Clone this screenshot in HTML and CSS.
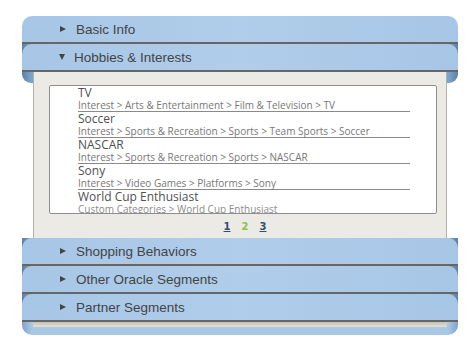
FILE: index.html
```html
<!DOCTYPE html>
<html>
<head>
    <meta charset="UTF-8">
    <title>segments</title>
    <link rel="stylesheet" href="styles.css">
</head>
<body>
    <div class="acc">
        <div class="head"><span class="tri"></span>Basic Info</div>
        <div class="fold">
            <div class="head"><span class="tri down"></span>Hobbies &amp; Interests</div>
        </div>
        <div class="sheet">
            <div class="panel">
                <div class="box">
                    <div class="item">
                        <div class="title">TV</div>
                        <div class="crumb">Interest &gt; Arts &amp; Entertainment &gt; Film &amp; Television &gt; TV</div>
                    </div>
                    <div class="item">
                        <div class="title">Soccer</div>
                        <div class="crumb">Interest &gt; Sports &amp; Recreation &gt; Sports &gt; Team Sports &gt; Soccer</div>
                    </div>
                    <div class="item">
                        <div class="title">NASCAR</div>
                        <div class="crumb">Interest &gt; Sports &amp; Recreation &gt; Sports &gt; NASCAR</div>
                    </div>
                    <div class="item">
                        <div class="title">Sony</div>
                        <div class="crumb">Interest &gt; Video Games &gt; Platforms &gt; Sony</div>
                    </div>
                    <div class="item">
                        <div class="title">World Cup Enthusiast</div>
                        <div class="crumb last">Custom Categories &gt; World Cup Enthusiast</div>
                    </div>
                </div>
                <div class="pages">
                    <a href="#">1</a>
                    <span class="cur">2</span>
                    <a href="#">3</a>
                </div>
            </div>
        </div>
        <div class="fold">
            <div class="head"><span class="tri"></span>Shopping Behaviors</div>
        </div>
        <div class="fold">
            <div class="head"><span class="tri"></span>Other Oracle Segments</div>
        </div>
        <div class="fold">
            <div class="head"><span class="tri"></span>Partner Segments</div>
        </div>
        <div class="roll"><div class="foot"></div></div>
    </div>
</body>
</html>
```

FILE: styles.css
```css
body {
    margin: 0;
    padding: 16px 0 0 22px;
    background: #fff;
    font-family: "Liberation Sans", Arial, sans-serif;
}
.acc {
    width: 436px;
}
.head {
    height: 26px;
    display: flex;
    align-items: center;
    padding-left: 38px;
    background: linear-gradient(to right, #a7c6e6, #b0cdea 50%, #a7c6e6);
    border-radius: 10px 10px 0 0;
    border-bottom: 2px solid #666;
    color: #444;
    font-size: 13.5px;
}
/* curl of the sheet above, seen in the rounded corners */
.fold {
    background: linear-gradient(to right, #5a80aa, #7ea3c9 9px, #7ea3c9 calc(100% - 9px), #5a80aa) top / 100% 11px no-repeat;
}
.tri {
    width: 0;
    height: 0;
    border-top: 3.5px solid transparent;
    border-bottom: 3.5px solid transparent;
    border-left: 6px solid #444;
    margin-right: 10px;
}
.tri.down {
    border-left: 3.5px solid transparent;
    border-right: 3.5px solid transparent;
    border-top: 6px solid #444;
    border-bottom: 0;
    margin-left: -1px;
    margin-right: 9px;
}
.sheet {
    position: relative;
}
.sheet::before {
    content: "";
    position: absolute;
    left: 0;
    right: 0;
    top: 0;
    height: 11px;
    background: linear-gradient(to right, #5a80aa, #7ea3c9 9px, #7ea3c9 calc(100% - 9px), #5a80aa);
    border-radius: 0 0 9px 9px;
}
.panel {
    position: relative;
    margin: 0 11px;
    height: 166px;
    background: #ebeae4;
    border-left: 1px solid #b3b1aa;
    border-right: 1px solid #b3b1aa;
    box-sizing: border-box;
    padding: 13px 9px 0 15px;
}
.box {
    height: 129px;
    box-sizing: border-box;
    background: #fff;
    border: 1px solid #8e8e8e;
    border-radius: 2px;
    overflow: hidden;
    padding-left: 28px;
    font-family: "Open Sans", sans-serif;
}
.item .title {
    font-size: 12px;
    line-height: 14px;
    color: #505050;
}
.item .crumb {
    width: 332px;
    font-size: 10px;
    line-height: 11px;
    color: #777;
    border-bottom: 1px solid #8a8a8a;
    white-space: nowrap;
}
.item .crumb.last {
    color: #8c8c8c;
}
.pages {
    display: flex;
    justify-content: center;
    gap: 11px;
    padding-top: 7px;
    padding-left: 4px;
    font-family: "DejaVu Sans", sans-serif;
    font-size: 10px;
    font-weight: bold;
}
.pages a {
    color: #2d4f7e;
}
.pages .cur {
    color: #8cc23f;
}
.roll {
    height: 13px;
    background: linear-gradient(to right, #7ea3c9, #a9c8e7 10px, #a9c8e7 calc(100% - 10px), #7ea3c9);
    border-radius: 0 0 10px 10px;
}
.foot {
    margin: 0 11px;
    height: 5px;
    background: linear-gradient(to bottom, #c4c1b8, #e2e0d8);
}
```
